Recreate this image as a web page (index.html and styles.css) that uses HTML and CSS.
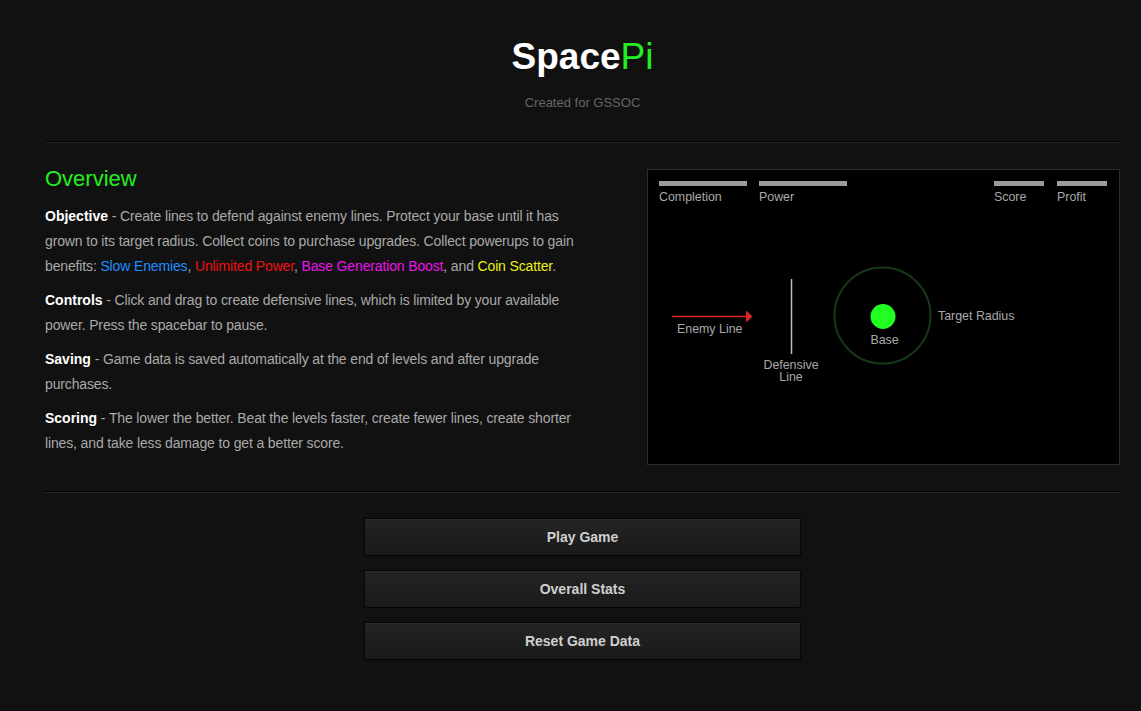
FILE: index.html
```html
<!DOCTYPE html>
<html lang="en">
<head>
<meta charset="utf-8">
<title>SpacePi</title>
<link rel="stylesheet" href="styles.css">
</head>
<body>
<div class="page">
  <header class="header">
    <h1 class="title"><span class="title-space">Space</span><span class="title-pi">Pi</span></h1>
    <p class="subtitle">Created for GSSOC</p>
  </header>
  <hr class="divider">
  <section class="overview">
    <div class="overview-text">
      <h2 class="overview-heading">Overview</h2>
      <p class="para"><b class="label">Objective</b> - Create lines to defend against enemy lines. Protect your base until it has grown to its target radius. Collect coins to purchase upgrades. Collect powerups to gain benefits: <span class="pw-slow">Slow Enemies</span>, <span class="pw-power">Unlimited Power</span>, <span class="pw-boost">Base Generation Boost</span>, and <span class="pw-coin">Coin Scatter</span>.</p>
      <p class="para"><b class="label">Controls</b> - Click and drag to create defensive lines, which is limited by your available power. Press the spacebar to pause.</p>
      <p class="para"><b class="label">Saving</b> - Game data is saved automatically at the end of levels and after upgrade purchases.</p>
      <p class="para"><b class="label">Scoring</b> - The lower the better. Beat the levels faster, create fewer lines, create shorter lines, and take less damage to get a better score.</p>
    </div>
    <div class="diagram">
      <svg class="diagram-svg" width="471" height="294" viewBox="0 0 471 294">
        <rect x="11" y="11" width="88" height="5" fill="#9a9a9a"/>
        <rect x="111" y="11" width="88" height="5" fill="#9a9a9a"/>
        <rect x="346" y="11" width="50" height="5" fill="#9a9a9a"/>
        <rect x="409" y="11" width="50" height="5" fill="#9a9a9a"/>
        <text x="11" y="31" class="svg-label">Completion</text>
        <text x="111" y="31" class="svg-label">Power</text>
        <text x="346" y="31" class="svg-label">Score</text>
        <text x="409" y="31" class="svg-label">Profit</text>

        <line x1="24" y1="146.5" x2="100" y2="146.5" stroke="#e02424" stroke-width="1.5"/>
        <polygon points="98,140.5 104.5,146.5 98,152.5" fill="#e02424"/>
        <text x="29" y="163" class="svg-label">Enemy Line</text>

        <line x1="143.5" y1="109" x2="143.5" y2="184" stroke="#bdbdbd" stroke-width="1.5"/>
        <text x="143" y="199" class="svg-label" text-anchor="middle">Defensive</text>
        <text x="143" y="211" class="svg-label" text-anchor="middle">Line</text>

        <circle cx="234.5" cy="145.5" r="48" fill="none" stroke="#173817" stroke-width="2"/>
        <circle cx="235" cy="146.5" r="12.5" fill="#22ff22"/>
        <text x="236.5" y="174" class="svg-label" text-anchor="middle">Base</text>
        <text x="290" y="150" class="svg-label">Target Radius</text>
      </svg>
    </div>
  </section>
  <hr class="divider">
  <nav class="menu">
    <button class="menu-btn" type="button">Play Game</button>
    <button class="menu-btn" type="button">Overall Stats</button>
    <button class="menu-btn" type="button">Reset Game Data</button>
  </nav>
</div>
</body>
</html>
```

FILE: styles.css
```css
html, body {
  margin: 0;
  padding: 0;
  background: #111111;
}

body {
  font-family: "Liberation Sans", Arial, sans-serif;
  color: #a9a9a9;
}

.page {
  padding: 0 21px 0 45px;
}

.header {
  text-align: center;
  padding-top: 36px;
}

.title {
  margin: 0;
  font-size: 37px;
  line-height: 42px;
  font-weight: normal;
}

.title-space {
  color: #ffffff;
  font-weight: bold;
}

.title-pi {
  color: #22ee22;
}

.subtitle {
  margin: 17px 0 0;
  font-size: 13px;
  line-height: 16px;
  color: #666666;
}

.divider {
  margin: 30px 0 0;
  border: 0;
  border-top: 1px solid #000000;
  border-bottom: 1px solid #262626;
  height: 0;
}

.overview {
  display: grid;
  grid-template-columns: 1fr 1fr;
  padding-top: 26px;
}

.overview-heading {
  margin: 0 0 15px;
  font-size: 22px;
  line-height: 20px;
  font-weight: normal;
  color: #22ee22;
}

.para {
  margin: 8.5px 0 0;
  font-size: 14px;
  line-height: 25.2px;
  letter-spacing: -0.14px;
  color: #a9a9a9;
}

.label {
  color: #ffffff;
  letter-spacing: 0;
}

.pw-slow { color: #1e90ff; }
.pw-power { color: #ee1111; }
.pw-boost { color: #ee11ee; }
.pw-coin { color: #eeee11; }

.diagram {
  justify-self: end;
  width: 471px;
  height: 294px;
  background: #000000;
  border: 1px solid #2e2e2e;
}

.diagram-svg {
  display: block;
}

.svg-label {
  font-family: "Liberation Sans", Arial, sans-serif;
  font-size: 12.4px;
  fill: #a9a9a9;
}

.overview + .divider {
  margin-top: 26px;
}

.menu {
  display: flex;
  flex-direction: column;
  align-items: center;
  gap: 14px;
  padding-top: 25px;
  padding-bottom: 40px;
}

.menu-btn {
  width: 437px;
  height: 38px;
  border: 1px solid #050505;
  border-radius: 2px;
  background: linear-gradient(#242424, #1a1a1a);
  box-shadow: inset 0 1px 0 #2c2c2c;
  color: #cfcfcf;
  font-family: "Liberation Sans", Arial, sans-serif;
  font-size: 14px;
  font-weight: bold;
  padding: 0;
  cursor: pointer;
}
```
